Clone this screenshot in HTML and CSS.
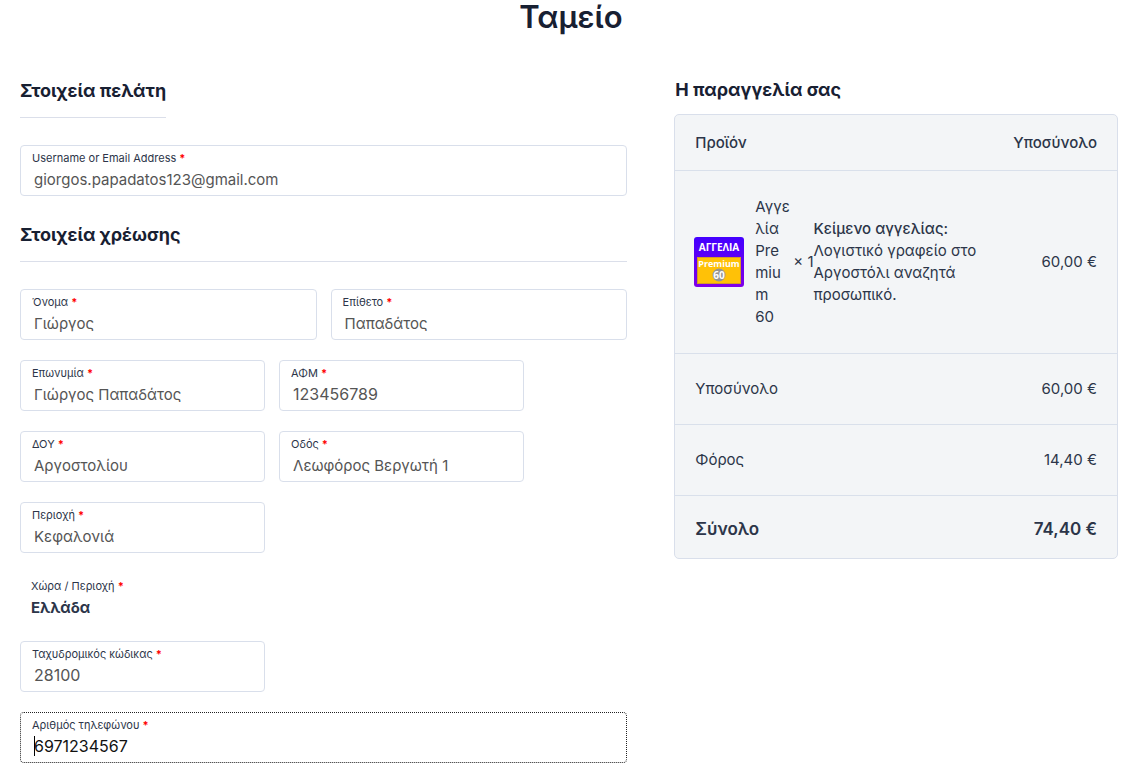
FILE: index.html
```html
<!DOCTYPE html>
<html lang="el">
<head>
<meta charset="utf-8">
<meta name="viewport" content="width=device-width, initial-scale=1">
<title>Ταμείο</title>
<link rel="stylesheet" href="styles.css">
</head>
<body>
<main class="page">
  <h1 class="page-title">Ταμείο</h1>
  <div class="checkout">
    <form class="details">
      <section class="section">
        <h2 class="heading heading-short">Στοιχεία πελάτη</h2>
        <div class="field">
          <label for="email">Username or Email Address <span class="required">*</span></label>
          <input id="email" type="email" value="giorgos.papadatos123@gmail.com">
        </div>
      </section>
      <section class="section">
        <h2 class="heading">Στοιχεία χρέωσης</h2>
        <div class="rows">
          <div class="row row-half">
            <div class="field">
              <label for="first-name">Όνομα <span class="required">*</span></label>
              <input id="first-name" type="text" value="Γιώργος">
            </div>
            <div class="field">
              <label for="last-name">Επίθετο <span class="required">*</span></label>
              <input id="last-name" type="text" value="Παπαδάτος">
            </div>
          </div>
          <div class="row">
            <div class="field">
              <label for="company">Επωνυμία <span class="required">*</span></label>
              <input id="company" type="text" value="Γιώργος Παπαδάτος">
            </div>
            <div class="field">
              <label for="vat">ΑΦΜ <span class="required">*</span></label>
              <input id="vat" class="digits" type="text" value="123456789">
            </div>
          </div>
          <div class="row">
            <div class="field">
              <label for="tax-office">ΔΟΥ <span class="required">*</span></label>
              <input id="tax-office" type="text" value="Αργοστολίου">
            </div>
            <div class="field">
              <label for="street">Οδός <span class="required">*</span></label>
              <input id="street" type="text" value="Λεωφόρος Βεργωτή 1">
            </div>
          </div>
          <div class="row">
            <div class="field">
              <label for="area">Περιοχή <span class="required">*</span></label>
              <input id="area" type="text" value="Κεφαλονιά">
            </div>
          </div>
          <div class="country">
            <span class="country-label">Χώρα / Περιοχή <span class="required">*</span></span>
            <strong class="country-name">Ελλάδα</strong>
          </div>
          <div class="row">
            <div class="field">
              <label for="postcode">Ταχυδρομικός κώδικας <span class="required">*</span></label>
              <input id="postcode" class="digits" type="text" value="28100">
            </div>
          </div>
          <div class="field field-active">
            <label for="phone">Αριθμός τηλεφώνου <span class="required">*</span></label>
            <input id="phone" class="digits" type="tel" value="6971234567">
          </div>
        </div>
      </section>
    </form>
    <section class="order">
      <h2 class="order-title">Η παραγγελία σας</h2>
      <table class="summary">
        <thead>
          <tr><th scope="col">Προϊόν</th><th scope="col" class="amount">Υποσύνολο</th></tr>
        </thead>
        <tbody>
          <tr class="item-row">
            <td>
              <div class="item">
                <svg class="thumb" viewBox="0 0 50 50" role="img" aria-label="Αγγελία Premium 60">
                  <defs><linearGradient id="violet" x1="0" y1="0" x2="0" y2="1"><stop offset="0" stop-color="#4300ff"/><stop offset="1" stop-color="#8000e6"/></linearGradient></defs>
                  <rect width="50" height="50" rx="3" fill="url(#violet)"/>
                  <rect x="3.5" y="20.5" width="43" height="26" fill="#ffc107" stroke="#d59a28"/>
                  <text class="thumb-title" x="25" y="14">ΑΓΓΕΛΙΑ</text>
                  <text class="thumb-plan" x="25" y="30">Premium</text>
                  <circle cx="25" cy="38" r="6.5" fill="#949494"/>
                  <text class="thumb-days" x="25" y="42">60</text>
                </svg>
                <span class="item-name">Αγγε<br>λία<br>Pre<br>miu<br>m<br>60</span>
                <span class="quantity">× 1</span>
                <div class="item-note"><strong>Κείμενο αγγελίας:</strong><p>Λογιστικό γραφείο στο Αργοστόλι αναζητά προσωπικό.</p></div>
              </div>
            </td>
            <td class="amount">60,00 €</td>
          </tr>
        </tbody>
        <tfoot>
          <tr><th scope="row">Υποσύνολο</th><td class="amount">60,00 €</td></tr>
          <tr><th scope="row">Φόρος</th><td class="amount">14,40 €</td></tr>
          <tr class="total"><th scope="row">Σύνολο</th><td class="amount">74,40 €</td></tr>
        </tfoot>
      </table>
    </section>
  </div>
</main>
</body>
</html>
```
FILE: styles.css
```css
* { box-sizing: border-box; }
body {
  margin: 0;
  background: #fff;
  color: #2c3549;
  font: 15px/22px Inter, "Liberation Sans", sans-serif;
}
h1, h2, p { margin: 0; }
.page { padding: 0 24px 15px 20px; }
.page-title {
  padding-left: 4px;
  color: #182032;
  font-size: 31px;
  line-height: 34px;
  font-weight: 600;
  text-align: center;
}
.checkout {
  display: grid;
  grid-template-columns: 26fr 19fr;
  gap: 47px;
  align-items: start;
  padding-top: 45px;
}
.details, .order, .field { min-width: 0; }
.section + .section { padding-top: 27px; }
.heading, .order-title {
  color: #182032;
  font-size: 18px;
  font-weight: 700;
}
.heading {
  padding-bottom: 14px;
  margin-bottom: 27px;
  border-bottom: 1px solid #dbdfea;
  line-height: 24px;
}
.heading-short { width: max-content; }
.rows { display: grid; gap: 20px; }
.row {
  display: grid;
  grid-template-columns: 11fr 11fr 4fr;
  gap: 14px;
}
.row-half { grid-template-columns: 1fr 1fr; }
.field {
  position: relative;
  display: flex;
  flex-direction: column;
  gap: 1px;
  padding: 4px 11px;
  border: 1px solid #d9dfeb;
  border-radius: 4px;
}
.field label, .country-label {
  font-size: 11px;
  line-height: 16px;
}
.required { color: #f00; font-weight: 700; }
.field input {
  width: 100%;
  height: 24px;
  padding: 0 2px;
  border: 0;
  outline: 0;
  background: transparent;
  color: #555;
  font: inherit;
}
.field .digits { font-size: 16px; }
.field-active { border: 1px dotted #222; }
.field-active input { color: #111; }
.field-active::after {
  content: "";
  position: absolute;
  left: 13px;
  bottom: 6px;
  width: 1px;
  height: 20px;
  background: #000;
}
.country {
  display: flex;
  flex-direction: column;
  gap: 3px;
  padding: 5px 11px 2px;
}
.country-name { font-weight: 700; }
.order-title { padding: 0 1px 13px; line-height: 22px; }
.summary {
  width: 100%;
  border: 1px solid #d9dfeb;
  border-radius: 5px;
  border-spacing: 0;
  background: #f3f5f7;
}
.summary th, .summary td {
  padding: 24px 20px;
  border-top: 1px solid #d9e0eb;
  font-weight: 400;
  text-align: left;
}
.summary thead th { padding: 17px 20px 16px; border-top: 0; font-weight: 500; }
.summary .amount { text-align: right; white-space: nowrap; }
.summary .item-row td { padding: 25px 20px 25px 19px; }
.summary .item-row td:first-child { padding-right: 0; }
.summary .total th, .summary .total td {
  padding: 22px 20px 18px;
  font-size: 17px;
  font-weight: 600;
}
.item { display: flex; align-items: center; }
.thumb { flex: none; width: 50px; height: 50px; margin-right: 11px; }
.thumb text {
  fill: #fff;
  font-family: "Open Sans", sans-serif;
  font-weight: 700;
  text-anchor: middle;
}
.thumb-title { font-size: 10px; }
.thumb-plan { font-size: 9px; }
.thumb-days { font-size: 10px; }
.item-name { flex: none; width: 36px; }
.quantity { flex: none; margin-left: 2px; white-space: nowrap; }
.item-note strong { font-weight: 500; }
```
